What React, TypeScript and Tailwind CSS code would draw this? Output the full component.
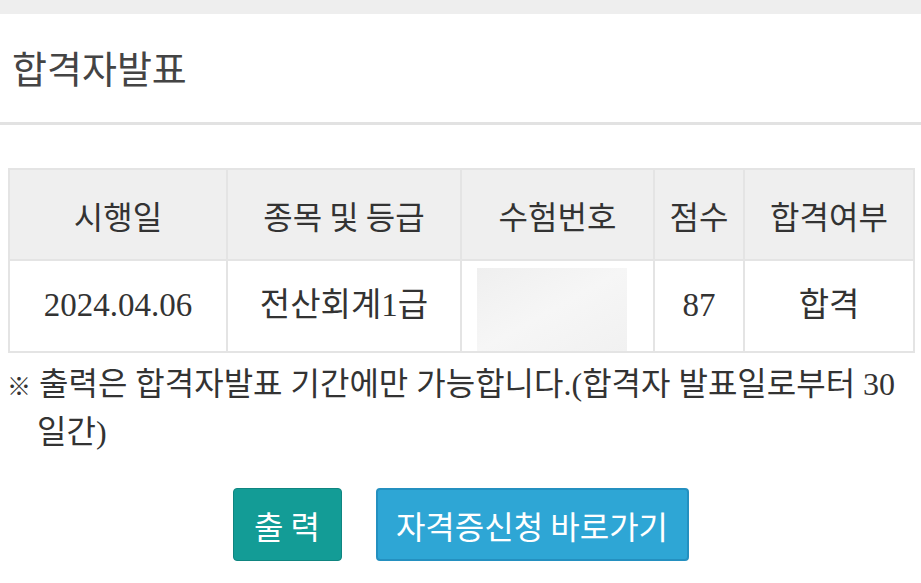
import React from "react";

const cols = [
  { label: "시행일", w: "w-[218px]" },
  { label: "종목 및 등급", w: "w-[234px]" },
  { label: "수험번호", w: "w-[193px]" },
  { label: "점수", w: "w-[90px]" },
  { label: "합격여부", w: "w-[170px]" },
];

const App = () => {
  return (
    <div className="min-h-screen bg-white text-[#333]">
      {/* top strip */}
      <div className="h-[14px] bg-[#eeeeee]" />

      {/* page title */}
      <div className="h-[111px] flex items-center px-[12px] pb-[2px] border-b-[3px] border-[#e2e2e2]">
        <h1 className="text-[38px] text-[#444] font-['Noto_Sans_CJK_KR',sans-serif] leading-none">
          합격자발표
        </h1>
      </div>

      {/* result table */}
      <div className="px-[8px] mt-[43px]">
        <table className="w-[905px] table-fixed border-collapse font-['Liberation_Serif','Noto_Sans_CJK_KR',serif] text-[33px] text-[#333]">
          <thead>
            <tr className="bg-[#efefef] h-[91px]">
              {cols.map((c) => (
                <th
                  key={c.label}
                  className={`${c.w} border-2 border-[#e4e4e4] font-normal font-['Noto_Sans_CJK_KR',sans-serif] text-[32px]`}
                >
                  {c.label}
                </th>
              ))}
            </tr>
          </thead>
          <tbody>
            <tr className="h-[92px] text-center">
              <td className="border-2 border-[#e4e4e4]">2024.04.06</td>
              <td className="border-2 border-[#e4e4e4]">전산회계1급</td>
              <td className="border-2 border-[#e4e4e4] p-0 align-bottom">
                <div className="ml-[15px] w-[150px] h-[83px] bg-gradient-to-br from-[#efefef] via-[#f6f6f6] to-[#f1f1f1]" />
              </td>
              <td className="border-2 border-[#e4e4e4]">87</td>
              <td className="border-2 border-[#e4e4e4]">합격</td>
            </tr>
          </tbody>
        </table>
      </div>

      {/* notice */}
      <p className="mt-[9px] pl-[37px] pr-[8px] -indent-[30px] text-[32px] leading-[45px] text-[#333] font-['Liberation_Serif','Noto_Sans_CJK_KR',serif]">
        <span className="text-[24px] font-bold align-middle">※</span> 출력은 합격자발표 기간에만 가능합니다.(합격자 발표일로부터 30 일간)
      </p>

      {/* actions */}
      <div className="flex justify-center gap-[34px] mt-[33px] font-['Noto_Sans_CJK_KR',sans-serif]">
        <button className="w-[109px] h-[73px] rounded-[4px] bg-[#139c96] border border-[#0f8580] text-white text-[32px]">
          출 력
        </button>
        <button className="w-[313px] h-[73px] rounded-[4px] bg-[#2ea6d5] border-2 border-[#2490c0] text-white text-[32px]">
          자격증신청 바로가기
        </button>
      </div>
    </div>
  );
};

export default App;
